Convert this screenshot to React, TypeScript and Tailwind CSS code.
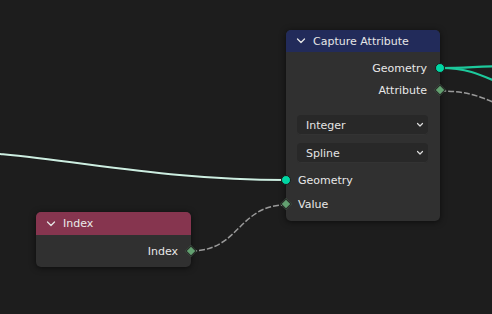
import React from "react";

const font = { fontFamily: '"DejaVu Sans", "Liberation Sans", sans-serif' };

function Chevron() {
  return (
    <svg width="10" height="8" viewBox="0 0 10 8" className="shrink-0">
      <polyline points="1.5,2 5,5.5 8.5,2" fill="none" stroke="#e4e4e4" strokeWidth="1.3" strokeLinecap="round" strokeLinejoin="round" />
    </svg>
  );
}

function SmallChevron() {
  return (
    <svg width="8" height="6" viewBox="0 0 8 6" className="shrink-0">
      <polyline points="1.5,1.5 4,4 6.5,1.5" fill="none" stroke="#dcdcdc" strokeWidth="1.2" strokeLinecap="round" strokeLinejoin="round" />
    </svg>
  );
}

function CircleSocket({ side }: { side: "left" | "right" }) {
  return (
    <span
      className={`absolute top-1/2 -translate-y-1/2 w-[10px] h-[10px] rounded-full bg-[#00d6a3] border border-[#1a1a1a] ${
        side === "left" ? "left-[-5px]" : "right-[-5px]"
      }`}
    />
  );
}

function DiamondSocket({ side }: { side: "left" | "right" }) {
  return (
    <span
      className={`absolute top-1/2 -translate-y-1/2 w-[8px] h-[8px] rotate-45 bg-[#62a070] border border-[#262626] ${
        side === "left" ? "left-[-4px]" : "right-[-4px]"
      }`}
    />
  );
}

function Dropdown({ label }: { label: string }) {
  return (
    <div className="h-[20px] ml-[11px] mr-[12px] rounded-[4px] bg-[#282828] flex items-center justify-between pl-[9px] pr-[4px] text-[#e4e4e4] shadow-[inset_0_-1px_0_#333333]">
      <span>{label}</span>
      <SmallChevron />
    </div>
  );
}

export default function App() {
  return (
    <div
      className="relative w-[492px] h-[314px] overflow-hidden bg-[#1d1d1d] text-[11px] leading-none"
      style={font}
    >
      <svg className="absolute inset-0" width="492" height="314" viewBox="0 0 492 314">
        {/* incoming geometry link */}
        <path d="M -80 150 C 40 150, 140 180, 286 180" fill="none" stroke="#1a1a1a" strokeWidth="3.5" />
        <path d="M -80 150 C 40 150, 140 180, 286 180" fill="none" stroke="#cdeee1" strokeWidth="2" />
        {/* outgoing geometry links */}
        <path d="M 440 68 C 470 68, 478 66, 520 66" fill="none" stroke="#1dc99c" strokeWidth="2.2" />
        <path d="M 440 68 C 475 68, 485 78, 530 96" fill="none" stroke="#1dc99c" strokeWidth="2.2" />
        {/* attribute link */}
        <path d="M 440 91 C 470 91, 480 96, 520 114" fill="none" stroke="#9a9a9a" strokeWidth="1.5" strokeDasharray="6 2" />
        {/* value link */}
        <path d="M 191 251 C 240 251, 238 205, 286 205" fill="none" stroke="#9a9a9a" strokeWidth="1.5" strokeDasharray="6 2" />
      </svg>

      {/* Capture Attribute node */}
      <div className="absolute left-[286px] top-[30px] w-[154px] h-[191px] rounded-[5px] bg-[#303030] flex flex-col shadow-[0_1px_6px_rgba(0,0,0,0.6)]">
        <div className="h-[22px] rounded-t-[5px] bg-[#222b5a] flex items-center gap-[7px] pl-[10px] text-[#e6e6e6]">
          <Chevron />
          <span>Capture Attribute</span>
        </div>
        <div className="pt-[5px]">
          <div className="relative h-[22px] flex items-center justify-end pr-[13px] text-[#e8e8e8]">
            <span>Geometry</span>
            <CircleSocket side="right" />
          </div>
          <div className="relative h-[22px] flex items-center justify-end pr-[13px] text-[#e8e8e8]">
            <span>Attribute</span>
            <DiamondSocket side="right" />
          </div>
        </div>
        <div className="mt-[14px] flex flex-col gap-[8px]">
          <Dropdown label="Integer" />
          <Dropdown label="Spline" />
        </div>
        <div className="mt-[5px]">
          <div className="relative h-[24px] flex items-center pl-[12px] text-[#e8e8e8]">
            <span>Geometry</span>
            <CircleSocket side="left" />
          </div>
          <div className="relative h-[24px] flex items-center pl-[12px] text-[#e8e8e8]">
            <span>Value</span>
            <DiamondSocket side="left" />
          </div>
        </div>
      </div>

      {/* Index node */}
      <div className="absolute left-[36px] top-[212px] w-[155px] h-[55px] rounded-[5px] bg-[#303030] flex flex-col shadow-[0_1px_6px_rgba(0,0,0,0.6)]">
        <div className="h-[23px] rounded-t-[5px] bg-[#86354f] flex items-center gap-[7px] pl-[10px] text-[#eaeaea]">
          <Chevron />
          <span>Index</span>
        </div>
        <div className="pt-[5px]">
          <div className="relative h-[22px] flex items-center justify-end pr-[13px] text-[#e8e8e8]">
            <span>Index</span>
            <DiamondSocket side="right" />
          </div>
        </div>
      </div>
    </div>
  );
}
